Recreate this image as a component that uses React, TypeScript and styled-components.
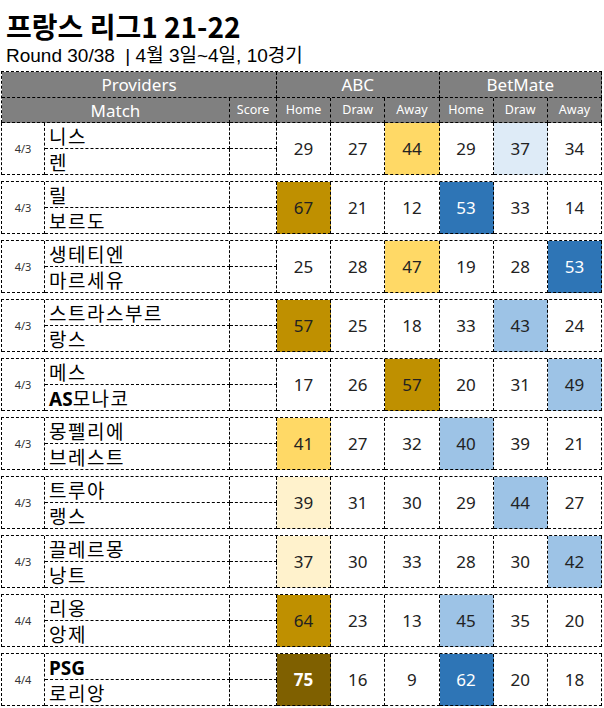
import React from 'react';
import styled, {createGlobalStyle} from 'styled-components';

type Tone = 'none' | 'gold' | 'deepGold' | 'yellow' | 'cream' | 'blue' | 'sky' | 'ice';

interface Odd {
    readonly v: number;
    readonly t?: Tone;
}

interface Game {
    readonly date: string;
    readonly home: React.ReactNode;
    readonly away: React.ReactNode;
    readonly abc: Odd[];
    readonly bet: Odd[];
}

const fills: Record<Tone, string> = {
    none: '#ffffff',
    gold: '#bf9000',
    deepGold: '#7f6000',
    yellow: '#ffd966',
    cream: '#fff2cc',
    blue: '#2e75b6',
    sky: '#9dc3e6',
    ice: '#deebf7',
};

const GlobalStyle = createGlobalStyle`
  body {
    margin: 0;
    background: #fff;
    font-family: "Noto Sans", "Noto Sans CJK KR", sans-serif;
  }
`;

const Page = styled.div`
  width: 604px;
`;

const Title = styled.h1`
  margin: 0;
  padding: 8px 0 0 6px;
  height: 36px;
  line-height: 36px;
  font-family: "Noto Sans CJK KR", sans-serif;
  font-size: 28px;
  font-weight: 700;
  color: #000;
`;

const Subtitle = styled.div`
  margin: 0 0 4px 0;
  padding-left: 6px;
  height: 23px;
  line-height: 23px;
  font-family: "Liberation Sans", "Noto Sans CJK KR", sans-serif;
  font-size: 19px;
  color: #000;
`;

const Sheet = styled.div`
  margin-left: 1px;
  width: 601px;
`;

const Grid = styled.div<{ $gap?: boolean }>`
  display: grid;
  grid-template-columns: 43px 185px 47px repeat(6, 1fr);
  border-left: 1px dashed #000;
  border-top: ${p => (p.$gap === false ? 'none' : '1px dashed #000')};
  margin-top: ${p => (p.$gap ? '6px' : '0')};
`;

const HeadCell = styled.div<{ $span?: number; $small?: boolean; $h: number }>`
  grid-column: span ${p => p.$span ?? 1};
  height: ${p => p.$h}px;
  box-sizing: border-box;
  border-right: 1px dashed #000;
  border-bottom: 1px dashed #000;
  background: #808080;
  color: #fff;
  display: flex;
  align-items: center;
  justify-content: center;
  font-size: ${p => (p.$small ? '12.5px' : '17px')};
  line-height: 1;
`;

const DateCell = styled.div`
  grid-row: span 2;
  box-sizing: border-box;
  border-right: 1px dashed #000;
  border-bottom: 1px dashed #000;
  display: flex;
  align-items: center;
  justify-content: center;
  font-size: 11px;
  color: #333;
`;

const NameCell = styled.div`
  height: 26px;
  box-sizing: border-box;
  border-right: 1px dashed #000;
  border-bottom: 1px dashed #000;
  padding-left: 4px;
  font-family: "Noto Sans CJK KR", sans-serif;
  font-size: 19px;
  letter-spacing: 1.5px;
  line-height: 25px;
  color: #000;
  white-space: nowrap;
`;

const ScoreCell = styled.div`
  height: 26px;
  box-sizing: border-box;
  border-right: 1px dashed #000;
  border-bottom: 1px dashed #000;
`;

const OddCell = styled.div<{ $tone: Tone }>`
  grid-row: span 2;
  box-sizing: border-box;
  border-right: 1px dashed #000;
  border-bottom: 1px dashed #000;
  background: ${p => fills[p.$tone]};
  color: ${p => (p.$tone === 'blue' || p.$tone === 'deepGold' ? '#fff' : '#222')};
  font-weight: ${p => (p.$tone === 'deepGold' ? 700 : 400)};
  display: flex;
  align-items: center;
  justify-content: center;
  font-size: 17px;
`;

const B = styled.b`
  font-family: "Noto Sans", sans-serif;
  font-weight: 700;
  letter-spacing: 0;
`;

const o = (v: number, t: Tone = 'none'): Odd => ({v, t});

const games: Game[] = [
    {date: '4/3', home: '니스', away: '렌', abc: [o(29), o(27), o(44, 'yellow')], bet: [o(29), o(37, 'ice'), o(34)]},
    {date: '4/3', home: '릴', away: '보르도', abc: [o(67, 'gold'), o(21), o(12)], bet: [o(53, 'blue'), o(33), o(14)]},
    {date: '4/3', home: '생테티엔', away: '마르세유', abc: [o(25), o(28), o(47, 'yellow')], bet: [o(19), o(28), o(53, 'blue')]},
    {date: '4/3', home: '스트라스부르', away: '랑스', abc: [o(57, 'gold'), o(25), o(18)], bet: [o(33), o(43, 'sky'), o(24)]},
    {date: '4/3', home: '메스', away: <><B>AS</B>모나코</>, abc: [o(17), o(26), o(57, 'gold')], bet: [o(20), o(31), o(49, 'sky')]},
    {date: '4/3', home: '몽펠리에', away: '브레스트', abc: [o(41, 'yellow'), o(27), o(32)], bet: [o(40, 'sky'), o(39), o(21)]},
    {date: '4/3', home: '트루아', away: '랭스', abc: [o(39, 'cream'), o(31), o(30)], bet: [o(29), o(44, 'sky'), o(27)]},
    {date: '4/3', home: '끌레르몽', away: '낭트', abc: [o(37, 'cream'), o(30), o(33)], bet: [o(28), o(30), o(42, 'sky')]},
    {date: '4/4', home: '리옹', away: '앙제', abc: [o(64, 'gold'), o(23), o(13)], bet: [o(45, 'sky'), o(35), o(20)]},
    {date: '4/4', home: <B>PSG</B>, away: '로리앙', abc: [o(75, 'deepGold'), o(16), o(9)], bet: [o(62, 'blue'), o(20), o(18)]},
];

function GameRows({game, first}: { game: Game; first: boolean }) {
    const odds = [...game.abc, ...game.bet];
    return (
        <Grid $gap={first ? false : true} style={{gridTemplateRows: '26px 26px'}}>
            <DateCell>{game.date}</DateCell>
            <NameCell>{game.home}</NameCell>
            <ScoreCell/>
            {odds.map((x, i) => (
                <OddCell key={i} $tone={x.t ?? 'none'}>{x.v}</OddCell>
            ))}
            <NameCell>{game.away}</NameCell>
            <ScoreCell/>
        </Grid>
    );
}

export default function App() {
    return (
        <Page>
            <GlobalStyle/>
            <Title>프랑스 리그1 21-22</Title>
            <Subtitle>Round 30/38 &nbsp;| 4월 3일~4일, 10경기</Subtitle>
            <Sheet>
                <Grid>
                    <HeadCell $span={3} $h={26}>Providers</HeadCell>
                    <HeadCell $span={3} $h={26}>ABC</HeadCell>
                    <HeadCell $span={3} $h={26}>BetMate</HeadCell>
                    <HeadCell $span={2} $h={25}>Match</HeadCell>
                    <HeadCell $small $h={25}>Score</HeadCell>
                    <HeadCell $small $h={25}>Home</HeadCell>
                    <HeadCell $small $h={25}>Draw</HeadCell>
                    <HeadCell $small $h={25}>Away</HeadCell>
                    <HeadCell $small $h={25}>Home</HeadCell>
                    <HeadCell $small $h={25}>Draw</HeadCell>
                    <HeadCell $small $h={25}>Away</HeadCell>
                </Grid>
                {games.map((g, i) => (
                    <GameRows key={i} game={g} first={i === 0}/>
                ))}
            </Sheet>
        </Page>
    );
}
